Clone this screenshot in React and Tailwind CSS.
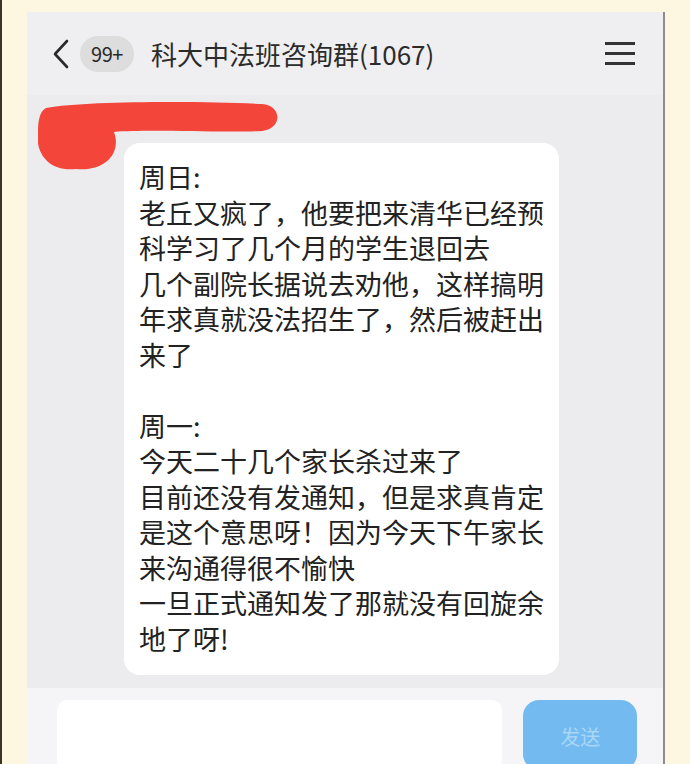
export default function App() {
  const lines = [
    "周日:",
    "老丘又疯了，他要把来清华已经预",
    "科学习了几个月的学生退回去",
    "几个副院长据说去劝他，这样搞明",
    "年求真就没法招生了，然后被赶出",
    "来了",
    "",
    "周一:",
    "今天二十几个家长杀过来了",
    "目前还没有发通知，但是求真肯定",
    "是这个意思呀！因为今天下午家长",
    "来沟通得很不愉快",
    "一旦正式通知发了那就没有回旋余",
    "地了呀!",
  ];

  return (
    <div
      className="relative w-[690px] h-[764px] overflow-hidden bg-[#fdf7e1] border-l-2 border-[#3b3323]"
      style={{ fontFamily: '"Noto Sans CJK SC", "Noto Sans", sans-serif' }}
    >
      <div className="ml-[25px] mt-[12px] w-[638px] h-[752px] flex flex-col bg-[#ececee] border-r-2 border-[#8c8c8c]">
        {/* header */}
        <div className="h-[83px] shrink-0 flex items-center bg-[#efeff1] pl-[23px] pr-[28px]">
          <svg width="22" height="30" viewBox="0 0 22 30" className="shrink-0">
            <path d="M17 2 L5 15 L17 28" fill="none" stroke="#2a2a2a" strokeWidth="2.6" strokeLinecap="round" strokeLinejoin="round" />
          </svg>
          <div className="ml-[8px] w-[54px] h-[36px] rounded-full bg-[#dddddd] flex items-center justify-center text-[20px] text-[#2a2a2a] tracking-tight">
            99+
          </div>
          <div className="ml-[17px] text-[26px] text-[#2b2b2b] whitespace-nowrap leading-none">
            科大中法班咨询群(1067)
          </div>
          <div className="ml-auto flex flex-col gap-[7px] w-[30px]">
            <div className="h-[3px] bg-[#333]" />
            <div className="h-[3px] bg-[#333]" />
            <div className="h-[3px] bg-[#333]" />
          </div>
        </div>

        {/* chat */}
        <div className="relative flex-1">
          <div className="ml-[97px] mt-[48px] w-[435px] bg-white rounded-[16px] pl-[15px] pt-[16px] pb-[19px]">
            {lines.map((l, i) => (
              <div key={i} className="h-[35.5px] leading-[35.5px] text-[27px] text-[#222] whitespace-nowrap">
                {l}
              </div>
            ))}
          </div>
          <svg className="absolute left-[11px] top-[0px]" width="250" height="76" viewBox="38 93 250 76">
            <path
              d="M46 106 C85 99 200 99 262 102 C282 103 283 127 262 129 C220 131 150 127 114 130 C122 152 104 170 76 167 C48 170 35 150 38 130 C38 118 40 109 46 106 Z"
              fill="#f4453a"
            />
          </svg>
        </div>

        {/* input bar */}
        <div className="h-[76px] shrink-0 bg-[#f5f5f7] flex items-start pt-[12px] pl-[30px] pr-[26px] gap-[21px]">
          <div className="w-[447px] h-[70px] bg-white rounded-[10px]" />
          <div className="w-[114px] h-[70px] rounded-[16px] bg-[#72baf0] flex items-start justify-center pt-[22px] text-[20px] text-[#a9d6f7]">
            发送
          </div>
        </div>
      </div>
    </div>
  );
}
